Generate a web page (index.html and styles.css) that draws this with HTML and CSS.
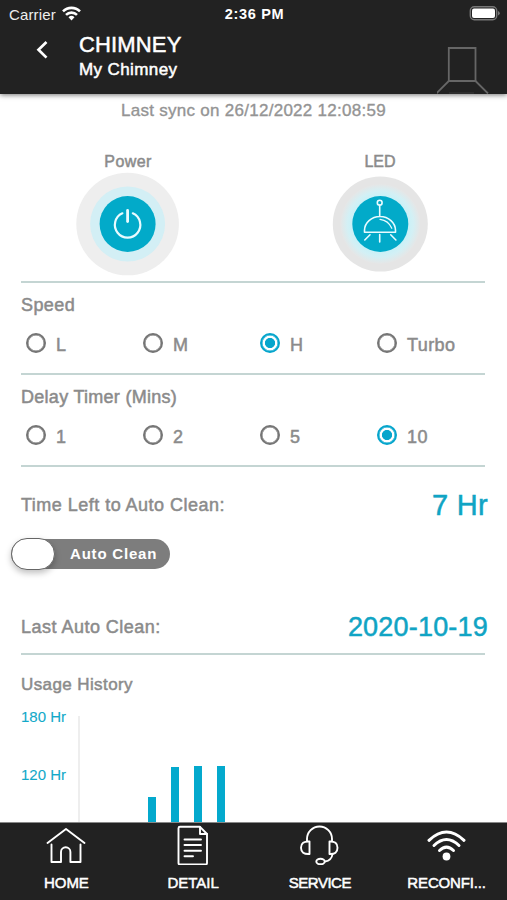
FILE: index.html
```html
<!DOCTYPE html>
<html lang="en">
<head>
<meta charset="utf-8">
<title>Chimney</title>
<link rel="stylesheet" href="styles.css">
</head>
<body>
<div class="app">
  <header class="header">
    <div class="status">
      <div class="carrier"><span>Carrier</span>
        <svg width="19" height="15" viewBox="0 0 19 15"><g fill="none" stroke="#fff" stroke-width="2.6"><path d="M1 5.4a12 12 0 0 1 17 0"/><path d="M4 8.9a7.8 7.8 0 0 1 11 0"/></g><path d="M6.500 11.300a4.300 4.300 0 0 1 6 0L9.500 14.400z" fill="#fff"/></svg>
      </div>
      <span class="clock">2:36 PM</span>
      <svg class="battery" width="31" height="15" viewBox="0 0 31 15"><rect x="1.300" y=".8" width="26.400" height="13" rx="4" fill="none" stroke="#777" stroke-width="1.400"/><rect x="3" y="2.500" width="23" height="9.600" rx="2" fill="#fff"/><path d="M29 5v4.600q1.800-.8 1.800-2.300T29 5z" fill="#777"/></svg>
    </div>
    <div class="titlebar">
      <svg class="back" width="12" height="20" viewBox="0 0 12 20"><path d="M10.500 2 2.500 9.700l8 7.900" fill="none" stroke="#fff" stroke-width="2.700"/></svg>
      <div class="titles">
        <h1>CHIMNEY</h1>
        <p>My Chimney</p>
      </div>
      <svg class="hood" width="52" height="47" viewBox="0 0 52 47"><g fill="none" stroke="#666" stroke-width="1.800"><path d="M11.800 1h26.700v33H11.800z"/><path d="M11.800 34-.7 46.500M38.500 34 51 46.500"/></g><path d="M12 46h25" stroke="#3b3b3b"/></svg>
    </div>
  </header>

  <main class="content">
    <section class="section controls">
      <p class="sync">Last sync on 26/12/2022 12:08:59</p>
      <div class="switches">
        <div class="control">
          <span class="power-label">Power</span>
          <svg width="104" height="104" viewBox="0 0 104 104">
            <circle cx="51.600" cy="52" r="51.300" fill="#eeeeee"/><circle cx="51.600" cy="52" r="37.500" fill="#d3eff5"/><circle cx="51.600" cy="52" r="28" fill="#02aac9"/>
            <g fill="none" stroke="#e9fbff" stroke-linecap="round"><path d="M46.400 41.300a12.700 12.700 0 1 0 10.400 0" stroke-width="2.200"/><path d="M51.600 38.500v11" stroke-width="2.800"/></g>
          </svg>
        </div>
        <div class="control">
          <span class="led-label">LED</span>
          <svg width="104" height="104" viewBox="0 0 104 104">
            <defs><radialGradient id="glow"><stop offset=".65" stop-color="#c6f1f8"/><stop offset=".82" stop-color="#d3f0f5"/><stop offset="1" stop-color="#e6e6e6"/></radialGradient></defs>
            <circle cx="52.300" cy="52" r="47.500" fill="#e5e5e5"/><circle cx="52.300" cy="52" r="40" fill="url(#glow)"/><circle cx="52.300" cy="52" r="28" fill="#02aac9"/>
            <g fill="none" stroke="#e9fbff" stroke-width="1.600" stroke-linecap="round" stroke-linejoin="round"><circle cx="51.700" cy="30.700" r="2.400"/><path d="M51.700 33.400v10.900M36.500 60.300v-2a15.500 13.800 0 0 1 31 0v2z"/><path d="M52 47.300q8.500 1 11.800 9" stroke-width="1.200"/><path d="m42 62.800-5.200 5.200M51.700 62.500v7.500M62.700 62.800l5.200 5.200"/></g>
          </svg>
        </div>
      </div>
    </section>

    <section class="section options">
      <h2 class="speed-title">Speed</h2>
      <div class="radios">
        <label class="option"><i class="radio"></i><span>L</span></label>
        <label class="option"><i class="radio"></i><span>M</span></label>
        <label class="option"><i class="radio on"></i><span>H</span></label>
        <label class="option"><i class="radio"></i><span>Turbo</span></label>
      </div>
    </section>

    <section class="section options">
      <h2 class="delay-title">Delay Timer (Mins)</h2>
      <div class="radios">
        <label class="option"><i class="radio"></i><span>1</span></label>
        <label class="option"><i class="radio"></i><span>2</span></label>
        <label class="option"><i class="radio"></i><span>5</span></label>
        <label class="option"><i class="radio on"></i><span>10</span></label>
      </div>
    </section>

    <section class="section clean">
      <div class="row"><h2 class="clean-title">Time Left to Auto Clean:</h2><span class="value">7 Hr</span></div>
      <div class="toggle"><i class="knob"></i><span>Auto Clean</span></div>
      <div class="row"><h2 class="clean-title">Last Auto Clean:</h2><span class="value date">2020-10-19</span></div>
    </section>

    <section class="usage">
      <h2 class="usage-title">Usage History</h2>
      <div class="chart">
        <div class="axis"><span>180 Hr</span><span>120 Hr</span></div>
        <div class="bars">
          <i class="bar" style="height:25px"></i>
          <i class="bar" style="height:55px"></i>
          <i class="bar" style="height:56px"></i>
          <i class="bar" style="height:56px"></i>
        </div>
      </div>
    </section>
  </main>

  <nav class="tabs">
    <div class="tab">
      <svg width="42" height="42" viewBox="0 0 42 42"><g fill="none" stroke="#fff" stroke-width="1.900" stroke-linecap="round" stroke-linejoin="round"><path d="M2.500 20 21 6l18.500 14"/><path d="M6.500 21.500V39H16V29a4.700 4.700 0 0 1 9.400 0v10H35.500V21.500"/></g></svg>
      <span>HOME</span>
    </div>
    <div class="tab">
      <svg width="42" height="42" viewBox="0 0 42 42"><g fill="none" stroke="#fff" stroke-width="1.900" stroke-linecap="round" stroke-linejoin="round"><path d="M8 3.800h20l7 7.200v29q0 1.500-1.500 1.500H8q-1.500 0-1.500-1.500V5.300Q6.500 3.800 8 3.800z"/><path d="M28 4v7h7M12.500 16.500h16.500M12.500 22h16.500M12.500 27.700h16.500M12.500 33.200h8.500"/></g></svg>
      <span>DETAIL</span>
    </div>
    <div class="tab">
      <svg width="42" height="42" viewBox="0 0 42 42"><g fill="none" stroke="#fff" stroke-width="1.900" stroke-linecap="round" stroke-linejoin="round"><path d="M8 18v-2a12.500 12.500 0 0 1 25 0v2"/><path d="M10.500 18.500v12.500q-8.500.5-8.500-6.200 0-6.800 8.500-6.300zM30.500 18.500v12.500q8 .5 8-6.200 0-6.800-8-6.300z"/><path d="M33.500 31q-.8 6.500-7.500 7.500"/><ellipse cx="21.500" cy="38.500" rx="4.200" ry="2.800"/></g></svg>
      <span class="t-service">SERVICE</span>
    </div>
    <div class="tab">
      <svg width="42" height="42" viewBox="0 0 42 42"><g fill="none" stroke="#fff" stroke-width="3" stroke-linecap="round"><path d="M3 17.300q17.500-16.600 35 0"/><path d="M8 22.500q12.500-12 25 0"/><path d="M13.500 27.500q7-6.600 14 0"/></g><circle cx="20.500" cy="33.500" r="3.900" fill="#fff"/></svg>
      <span class="t-reconfig">RECONFI...</span>
    </div>
  </nav>
</div>
</body>
</html>
```
FILE: styles.css
```css
* { box-sizing: border-box; }
body { margin: 0; background: #fff; font-family: "Liberation Sans", Arial, sans-serif; color: #8b8b8b; }
h1, h2, p { margin: 0; font-weight: 400; }
svg { display: block; flex: none; }
span, h1, h2, p { white-space: nowrap; }
.app { width: 507px; height: 900px; display: flex; flex-direction: column; overflow: hidden; -webkit-text-stroke: .5px currentColor; }

.header { flex: none; height: 94px; background: #222; color: #fff; box-shadow: 0 1px 5px rgba(0,0,0,.55); z-index: 1; }
.status { height: 28px; display: grid; grid-template-columns: 1fr auto 1fr; align-items: center; padding: 0 7px 0 9px; }
.carrier { display: flex; align-items: center; gap: 6px; font-size: 15px; letter-spacing: .15px; color: #eee; -webkit-text-stroke: 0; }
.carrier svg { margin-top: -2px; }
.clock { font-size: 14.5px; font-weight: 700; letter-spacing: .7px; -webkit-text-stroke: 0; }
.battery { justify-self: end; margin-top: -1px; }
.titlebar { height: 66px; display: flex; align-items: flex-start; padding: 4px 18px 0 36px; }
.back { margin-top: 8px; }
.titles { flex: 1; padding-left: 31px; }
.titles h1 { font-size: 22px; line-height: 26px; letter-spacing: .15px; }
.titles p { font-size: 17px; line-height: 24px; letter-spacing: .4px; }
.hood { margin-top: 15px; }

.content { flex: 1; min-height: 0; overflow: hidden; display: flex; flex-direction: column; }
.section { flex: none; margin: 0 22px 0 21px; border-bottom: 2px solid #c4d5d3; }
.controls { height: 189px; }
.sync { text-align: center; font-size: 17px; letter-spacing: .27px; line-height: 20px; padding: 7px 0 0 1px; color: #949494; -webkit-text-stroke-width: .35px; }
.switches { display: flex; justify-content: space-between; padding: 31px 53px 0 55px; }
.control { display: flex; flex-direction: column; align-items: center; width: 104px; line-height: 20px; font-size: 16px; }
.power-label { letter-spacing: .4px; }

.options { height: 92px; padding-top: 10px; }
h2 { font-size: 18px; line-height: 24px; }
.speed-title { letter-spacing: .4px; }
.delay-title { letter-spacing: .28px; }
.radios { display: grid; grid-template-columns: repeat(4, 117px); padding: 16px 0 0 5px; }
.option { display: flex; align-items: center; gap: 10px; font-size: 18px; height: 20px; letter-spacing: .4px; }
.option span { padding-top: 4px; line-height: 20px; }
.radio { width: 20px; height: 20px; border: 2.5px solid #757575; border-width: 2px; box-shadow: inset 0 0 0 .5px #757575; border-radius: 50%; }
.radio.on { border-color: #05a5cc; box-shadow: inset 0 0 0 .5px #05a5cc; background: radial-gradient(circle, #05a5cc 4.7px, #fff 5.4px); }

.clean { height: 188px; padding-top: 22px; }
.clean-title { letter-spacing: .48px; }
.row { display: flex; justify-content: space-between; align-items: center; height: 32px; margin-right: -3px; }
.value { color: #10a4c4; font-size: 29px; letter-spacing: .3px; }
.date { font-size: 27px; letter-spacing: .2px; }
.toggle { display: flex; align-items: center; width: 159px; height: 30px; margin: 18px 0 42px -10px; border-radius: 15px; background: #7d7d7d; color: #fff; font-size: 15px; font-weight: 700; letter-spacing: .8px; -webkit-text-stroke: 0; }
.toggle span { margin-top: -2px; }
.knob { width: 44px; height: 32px; margin-right: 15px; border: 1px solid #666; border-radius: 16px; background: #fff; box-shadow: 0 3px 6px rgba(0,0,0,.25); }

.usage { flex: 1; min-height: 0; display: flex; flex-direction: column; padding: 18px 21px 0; }
.usage-title { font-size: 17px; letter-spacing: .4px; }
.chart { flex: 1; min-height: 0; display: flex; padding-top: 10px; }
.axis { width: 57px; display: flex; flex-direction: column; gap: 38px; color: #13a9c9; font-size: 15px; line-height: 20px; -webkit-text-stroke: .1px; }
.bars { flex: 1; display: flex; align-items: flex-end; gap: 15px; margin-top: 9px; padding-left: 68px; border-left: 2px solid #eee; }
.bar { width: 8px; background: #04a9cd; }

.tabs { flex: none; height: 78px; display: grid; grid-template-columns: repeat(4, 1fr); background: #222; border-top: 1px solid #888; color: #fff; }
.tab { display: flex; flex-direction: column; align-items: center; font-size: 15px; line-height: 20px; padding: 0 0 0 6px; }
.tab span { margin-top: 8px; }
.t-service { letter-spacing: -.5px; }
.t-reconfig { letter-spacing: -.15px; }
```
